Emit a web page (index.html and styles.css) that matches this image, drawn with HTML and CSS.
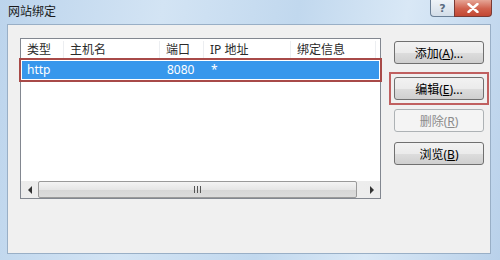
FILE: index.html
```html
<!DOCTYPE html>
<html lang="zh-CN">
<head>
    <meta charset="UTF-8">
    <title>网站绑定</title>
    <link rel="stylesheet" href="styles.css">
</head>
<body>

<div class="window">
    <div class="titlebar">
        <span class="title">网站绑定</span>
        <div class="caption">
            <div class="cap-btn help">?</div>
            <div class="cap-btn close">
                <svg width="12" height="10" viewBox="0 0 12 10">
                    <path d="M1.5 1 L10.5 9 M10.5 1 L1.5 9" stroke="#fff" stroke-width="2.4" stroke-linecap="round"/>
                </svg>
            </div>
        </div>
    </div>

    <div class="client">
        <div class="listview">
            <div class="lv-head">
                <div class="col c1">类型</div>
                <div class="col c2">主机名</div>
                <div class="col c3">端口</div>
                <div class="col c4">IP 地址</div>
                <div class="col c5">绑定信息</div>
            </div>
            <div class="lv-body">
                <div class="lv-row selected">
                    <div class="col c1">http</div>
                    <div class="col c2"></div>
                    <div class="col c3">8080</div>
                    <div class="col c4">*</div>
                    <div class="col c5"></div>
                </div>
            </div>
            <div class="hscroll">
                <div class="arrow"><span class="tri left"></span></div>
                <div class="thumb"><span class="grip"></span></div>
                <div class="track"></div>
                <div class="arrow"><span class="tri right"></span></div>
            </div>
        </div>

        <div class="buttons">
            <button class="btn add">添加(<u>A</u>)...</button>
            <div class="mark">
                <button class="btn">编辑(<u>E</u>)...</button>
            </div>
            <button class="btn remove" disabled>删除(<u>R</u>)</button>
            <button class="btn browse">浏览(<u>B</u>)</button>
        </div>
    </div>
</div>

</body>
</html>
```

FILE: styles.css
```css
body {
    margin: 0;
    font-family: "Noto Sans", "Noto Sans CJK SC", sans-serif;
    font-size: 12px;
}

.window {
    width: 500px;
    height: 260px;
    box-sizing: border-box;
    background: linear-gradient(100deg, #bcd4ec 0%, #d3e4f4 30%, #c1d8ee 55%, #d9e8f6 75%, #b9d1ea 100%);
}

.titlebar {
    height: 24px;
    display: flex;
    align-items: flex-start;
}
.title {
    padding-left: 8px;
    line-height: 24px;
    color: #1a1a1a;
}
.caption {
    margin-left: auto;
    margin-right: 8px;
    display: flex;
}
.cap-btn {
    height: 17px;
    display: flex;
    align-items: center;
    justify-content: center;
    box-sizing: border-box;
    border: 1px solid #6b7f96;
    border-top: none;
}
.help {
    width: 24px;
    border-radius: 0 0 0 4px;
    border-right: none;
    background: linear-gradient(#eef3f8, #d3dde8);
    color: #5a6b80;
    font-family: "DejaVu Sans", sans-serif;
    font-size: 11px;
    font-weight: bold;
}
.close {
    width: 38px;
    border-color: #7a3a34;
    border-radius: 0 0 4px 0;
    background: linear-gradient(#e6a596, #d0604c 55%, #c24733);
}

.client {
    margin-left: 7px;
    width: 484px;
    height: 230px;
    box-sizing: border-box;
    border: 1px solid #99afc6;
    background: #f0f0f0;
    display: flex;
    align-items: flex-start;
    padding: 13px 0 0 12px;
}

.listview {
    width: 361px;
    height: 161px;
    box-sizing: border-box;
    border: 1px solid #828790;
    background: #fff;
    display: flex;
    flex-direction: column;
}
.lv-head {
    height: 21px;
    display: flex;
    align-items: center;
    color: #2a2a2a;
}
.lv-head .col {
    border-right: 1px solid #eceef1;
    height: 17px;
    line-height: 17px;
}
.col {
    box-sizing: border-box;
    padding-left: 6px;
    white-space: nowrap;
}
.c1 { width: 43px; }
.c2 { width: 96px; }
.c3 { width: 44px; }
.c4 { width: 87px; }
.c5 { width: 85px; }

.lv-body {
    flex: 1;
}
.lv-row {
    display: flex;
    height: 18px;
    line-height: 18px;
    margin: 1px 0 0 1px;
    width: 357px;
}
.lv-row .col:first-child { padding-left: 5px; }
.selected {
    background: #3797ec;
    color: #fff;
    outline: 2px solid #a84a48;
    outline-offset: 1px;
}

.hscroll {
    height: 17px;
    display: flex;
    background: linear-gradient(90deg, #ececec, #f6f6f6 50%, #ececec);
}
.arrow {
    width: 17px;
    display: flex;
    align-items: center;
    justify-content: center;
}
.tri {
    width: 0;
    height: 0;
    border-top: 4px solid transparent;
    border-bottom: 4px solid transparent;
}
.tri.left { border-right: 4px solid #333; }
.tri.right { border-left: 4px solid #333; }
.thumb {
    width: 319px;
    box-sizing: border-box;
    border: 1px solid #9a9a9a;
    border-radius: 2px;
    background: linear-gradient(#f4f4f4, #e6e6e6 50%, #d6d6d6 51%, #dcdcdc);
    display: flex;
    align-items: center;
    justify-content: center;
}
.grip {
    width: 7px;
    height: 7px;
    background: repeating-linear-gradient(90deg, #555 0 1px, transparent 1px 3px);
}
.track { flex: 1; }

.buttons {
    margin-left: 13px;
    width: 90px;
    display: flex;
    flex-direction: column;
}
.btn {
    height: 23px;
    width: 90px;
    border: 1px solid #707070;
    border-radius: 3px;
    background: linear-gradient(#f2f2f2, #ebebeb 50%, #dddddd 51%, #cfcfcf);
    font-family: "Noto Sans", "Noto Sans CJK SC", sans-serif;
    font-size: 12px;
    color: #000;
    padding: 0;
}
.add { margin-top: 3px; }
.mark {
    margin: 8px -5px -5px;
    border: 2px solid #c06060;
    padding: 3px;
    display: flex;
}
.remove {
    margin-top: 9px;
    border-color: #adb2b5;
    background: #f4f4f4;
    color: #8b8b8b;
}
.browse { margin-top: 10px; }
```
